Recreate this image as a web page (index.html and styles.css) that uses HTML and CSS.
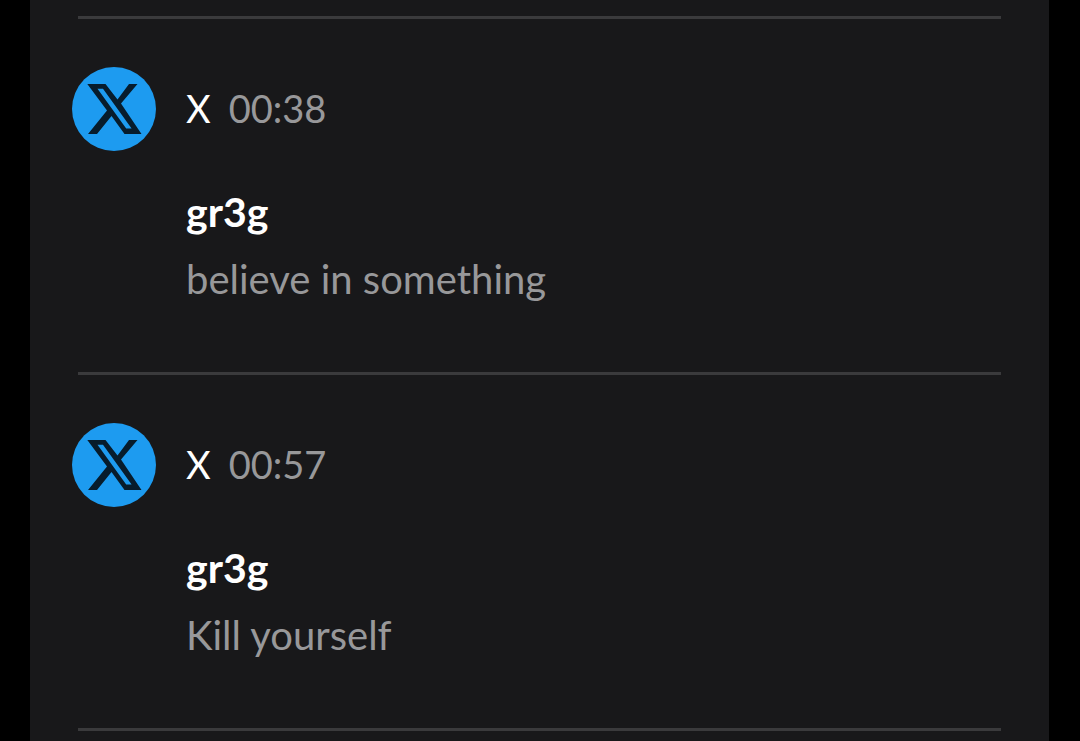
FILE: index.html
```
<!DOCTYPE html>
<html lang="en">
<head>
    <meta charset="UTF-8">
    <meta name="viewport" content="width=device-width, initial-scale=1.0">
    <title>Notification history</title>
    <link rel="stylesheet" href="styles.css">
</head>
<body>

    <svg class="symbols" aria-hidden="true">
        <symbol id="x-logo" viewBox="0 0 84 84">
            <path fill-rule="evenodd" d="M15.3 17H33.5L45.5 32.5L57 17H65.5L49 36.5L69.5 67H52.5L39.5 49L25 67H16L35 43.5ZM25.5 21.7L54.2 61.5H59.6L31 21.7Z"/>
        </symbol>
    </svg>

    <main class="panel">
        <article class="notification">
            <svg class="avatar" role="img" aria-label="X"><use href="#x-logo"/></svg>
            <div class="meta">
                <span class="app">X</span>
                <time class="time">00:38</time>
            </div>
            <div class="message">
                <h2 class="sender">gr3g</h2>
                <p class="text">believe in something</p>
            </div>
        </article>

        <article class="notification">
            <svg class="avatar" role="img" aria-label="X"><use href="#x-logo"/></svg>
            <div class="meta">
                <span class="app">X</span>
                <time class="time">00:57</time>
            </div>
            <div class="message">
                <h2 class="sender">gr3g</h2>
                <p class="text">Kill yourself</p>
            </div>
        </article>

        <hr class="divider">
    </main>

</body>
</html>
```
FILE: styles.css
```
* { margin: 0; padding: 0; box-sizing: border-box; }
body {
    background-color: #000;
    color: #fff;
    font-family: Lato, sans-serif;
}
.symbols { display: none; }
.panel {
    min-height: 100vh;
    margin: 0 31px 0 30px;
    padding: 16px 48px 0;
    background-color: #18181a;
}
.notification {
    display: grid;
    grid-template-columns: 78px 1fr;
    column-gap: 30px;
    row-gap: 35px;
    padding: 48px 0 67px;
    border-top: 3px solid #3a3a3c;
}
.avatar {
    width: 84px;
    height: 84px;
    margin-left: -6px;
    border-radius: 50%;
    background-color: #1d9bf0;
    fill: #071c2c;
}
.meta {
    display: flex;
    align-items: center;
    gap: 18px;
    padding-bottom: 2px;
    font-size: 38px;
}
.message { grid-column: 2; }
.sender {
    font-size: 41px;
    line-height: 52px;
}
.text {
    margin-top: 15px;
    font-size: 40px;
    line-height: 52px;
}
.time, .text { color: #98989a; }
.divider {
    border: 0;
    border-top: 3px solid #3a3a3c;
}
```
